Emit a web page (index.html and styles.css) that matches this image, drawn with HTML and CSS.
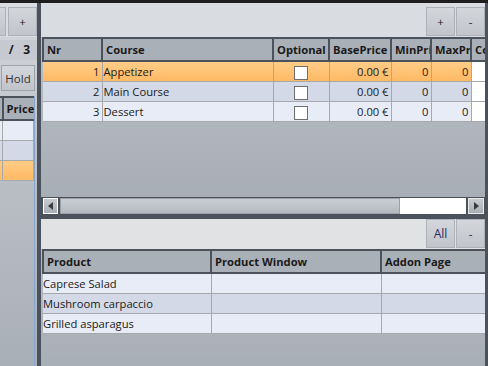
FILE: index.html
```html
<!DOCTYPE html>
<html lang="en">
<head>
    <meta charset="UTF-8">
    <title>Courses</title>
    <link rel="stylesheet" href="styles.css">
</head>
<body>
    <div class="app">
        <div class="side">
            <div class="side-tools">
                <button class="tool-btn" aria-label="Previous"></button>
                <button class="tool-btn">+</button>
            </div>
            <div class="pager"><span>/&nbsp;&nbsp;&nbsp;3</span></div>
            <button class="hold-btn">Hold</button>
            <div class="side-grid">
                <table class="grid side-table">
                    <colgroup><col style="width:40px"><col style="width:31px"></colgroup>
                    <tr><th></th><th>Price</th></tr>
                    <tr class="odd"><td></td><td></td></tr>
                    <tr class="even"><td></td><td></td></tr>
                    <tr class="selected"><td></td><td></td></tr>
                </table>
            </div>
        </div>

        <div class="splitter"></div>

        <div class="main">
            <div class="tools">
                <button class="tool-btn">+</button>
                <button class="tool-btn">-</button>
            </div>

            <div class="grid-area courses">
                <table class="grid course-table">
                    <colgroup>
                        <col style="width:59px"><col style="width:171px"><col style="width:56px">
                        <col style="width:62px"><col style="width:40px"><col style="width:40px"><col style="width:40px">
                    </colgroup>
                    <tr>
                        <th>Nr</th><th>Course</th><th>Optional</th><th>BasePrice</th><th>MinPrice</th><th>MaxPrice</th><th>Color</th>
                    </tr>
                    <tr class="selected">
                        <td class="num">1</td><td>Appetizer</td><td class="check"><span class="box"></span></td>
                        <td class="num">0.00 €</td><td class="num">0</td><td class="num">0</td><td class="color"></td>
                    </tr>
                    <tr class="even">
                        <td class="num">2</td><td>Main Course</td><td class="check"><span class="box"></span></td>
                        <td class="num">0.00 €</td><td class="num">0</td><td class="num">0</td><td class="color"></td>
                    </tr>
                    <tr class="odd">
                        <td class="num">3</td><td>Dessert</td><td class="check"><span class="box"></span></td>
                        <td class="num">0.00 €</td><td class="num">0</td><td class="num">0</td><td class="color"></td>
                    </tr>
                </table>
            </div>

            <div class="hscroll">
                <div class="arrow"><svg width="5" height="8" viewBox="0 0 5 8"><path d="M5 0 L0 4 L5 8 Z" fill="#3c3c3c"/></svg></div>
                <div class="thumb"></div>
                <div class="track"></div>
                <div class="arrow right"><svg width="5" height="8" viewBox="0 0 5 8"><path d="M0 0 L5 4 L0 8 Z" fill="#3c3c3c"/></svg></div>
            </div>

            <div class="tools tools-low">
                <button class="tool-btn all">All</button>
                <button class="tool-btn">-</button>
            </div>

            <div class="grid-area products">
                <table class="grid product-table">
                    <colgroup>
                        <col style="width:168px"><col style="width:170px"><col style="width:105px">
                    </colgroup>
                    <tr><th>Product</th><th>Product Window</th><th>Addon Page</th></tr>
                    <tr class="odd"><td class="flush">Caprese Salad</td><td></td><td></td></tr>
                    <tr class="even"><td class="flush">Mushroom carpaccio</td><td></td><td></td></tr>
                    <tr class="odd"><td class="flush">Grilled asparagus</td><td></td><td></td></tr>
                </table>
            </div>
        </div>
    </div>
</body>
</html>
```

FILE: styles.css
```css
:root {
    --dark: #4b525b;
    --header: #aab0b8;
    --row-light: #e8ecf6;
    --row-dark: #d3d9e7;
    --line: #a6a8ab;
    --tool-bg: #d9dce0;
}

* {
    margin: 0;
    padding: 0;
    box-sizing: border-box;
}

body {
    width: 488px;
    height: 366px;
    overflow: hidden;
    background: #1e1e1e;
    font-family: 'Open Sans', 'Noto Sans', sans-serif;
    font-size: 11.2px;
    color: #1a1a1a;
}

.app {
    display: flex;
    height: 363px;
    margin-top: 3px;
}

/* left panel */
.side {
    width: 37px;
    flex-shrink: 0;
    display: flex;
    flex-direction: column;
    background: linear-gradient(#d6d9dd 0%, #bcc1c8 40%, #a9afb7 100%);
    overflow: hidden;
}

.side-tools {
    height: 34px;
    padding-top: 4px;
    display: flex;
    justify-content: flex-end;
    gap: 2px;
    background: var(--tool-bg);
}

.pager {
    height: 20px;
    margin-top: 3px;
    background: #c6cad0;
    display: flex;
    justify-content: flex-end;
    padding-right: 7px;
    font-weight: 700;
    font-size: 12px;
    line-height: 20px;
    white-space: nowrap;
    overflow: hidden;
}

.pager span {
    flex-shrink: 0;
}

.hold-btn {
    height: 26px;
    width: 34px;
    margin: 5px 0 0 1px;
    border: 1px solid #9ea3aa;
    background: linear-gradient(#d4d7db, #c0c4ca);
    font-family: inherit;
    font-size: 11.5px;
    color: #333;
}

.side-grid {
    flex: 1;
    width: 35px;
    margin-top: 5px;
    border-right: 1px solid #86a6cc;
    display: flex;
    justify-content: flex-end;
    align-items: flex-start;
    overflow: hidden;
}

.side-table {
    flex-shrink: 0;
    width: 71px;
}

.splitter {
    width: 4px;
    flex-shrink: 0;
    background: var(--dark);
}

/* main panel */
.main {
    flex: 1;
    display: flex;
    flex-direction: column;
    border-right: 3px solid var(--dark);
    min-width: 0;
    background: #bfc3ca;
}

.tools {
    height: 34px;
    padding-top: 4px;
    display: flex;
    justify-content: flex-end;
    gap: 1px;
    background: var(--tool-bg);
}

.tools-low {
    height: 30px;
    padding-top: 0;
    background: #e1e2e4;
}

.tool-btn {
    width: 29px;
    height: 29px;
    flex-shrink: 0;
    border: 1px solid #aeb2b8;
    background: linear-gradient(#d3d6da, #c1c5cb);
    font-family: inherit;
    font-size: 11.5px;
    color: #222;
}

.tool-btn.all {
    color: #2a2a62;
    font-size: 12px;
}

.grid-area {
    overflow: hidden;
    padding-left: 1px;
    background: linear-gradient(#b9bec6, #a8aeb6);
}

.courses {
    height: 160px;
}

.products {
    flex: 1;
}

/* tables */
.grid {
    border-collapse: collapse;
    table-layout: fixed;
    white-space: nowrap;
}

.course-table {
    width: 468px;
}

.product-table {
    width: 443px;
}

.grid th {
    height: 23px;
    background: var(--header);
    border-top: 2px solid var(--dark);
    border-bottom: 2px solid var(--dark);
    border-left: 2px solid var(--dark);
    text-align: left;
    padding: 0 0 0 3px;
    font-weight: 700;
    overflow: hidden;
}

.grid td {
    height: 20px;
    border: 1px solid var(--line);
    border-top: 0;
    padding: 0 1px;
    overflow: hidden;
}

.grid td:first-child {
    border-left: 0;
}

.grid td.flush {
    padding-left: 0;
}

.grid td.num {
    text-align: right;
    padding-right: 2px;
}

.grid td.check {
    text-align: center;
}

.grid td.color {
    background: #fff;
}

.box {
    display: inline-block;
    width: 14px;
    height: 14px;
    margin-top: 3px;
    border: 1px solid #6f6f6f;
    background: #fff;
    vertical-align: top;
}

.odd td { background: var(--row-light); }
.even td { background: var(--row-dark); }
.selected td { background: linear-gradient(#ffcd87, #ffb964); }

/* scrollbar */
.hscroll {
    height: 22px;
    padding: 1px 1px 5px 2px;
    display: flex;
    gap: 2px;
    background: var(--dark);
}

.arrow {
    width: 15px;
    border: 1px solid #fff;
    background: linear-gradient(#c8ccd1, #a9aeb6);
    display: flex;
    align-items: center;
    justify-content: center;
}

.arrow.right {
    width: 16px;
    border-color: #e8e8e8;
}

.thumb {
    width: 340px;
    border: 1px solid #9aa0a7;
    background: linear-gradient(#cbcfd4, #b4b9c0);
}

.track {
    flex: 1;
    margin-left: -2px;
    background: #fff;
}
```
